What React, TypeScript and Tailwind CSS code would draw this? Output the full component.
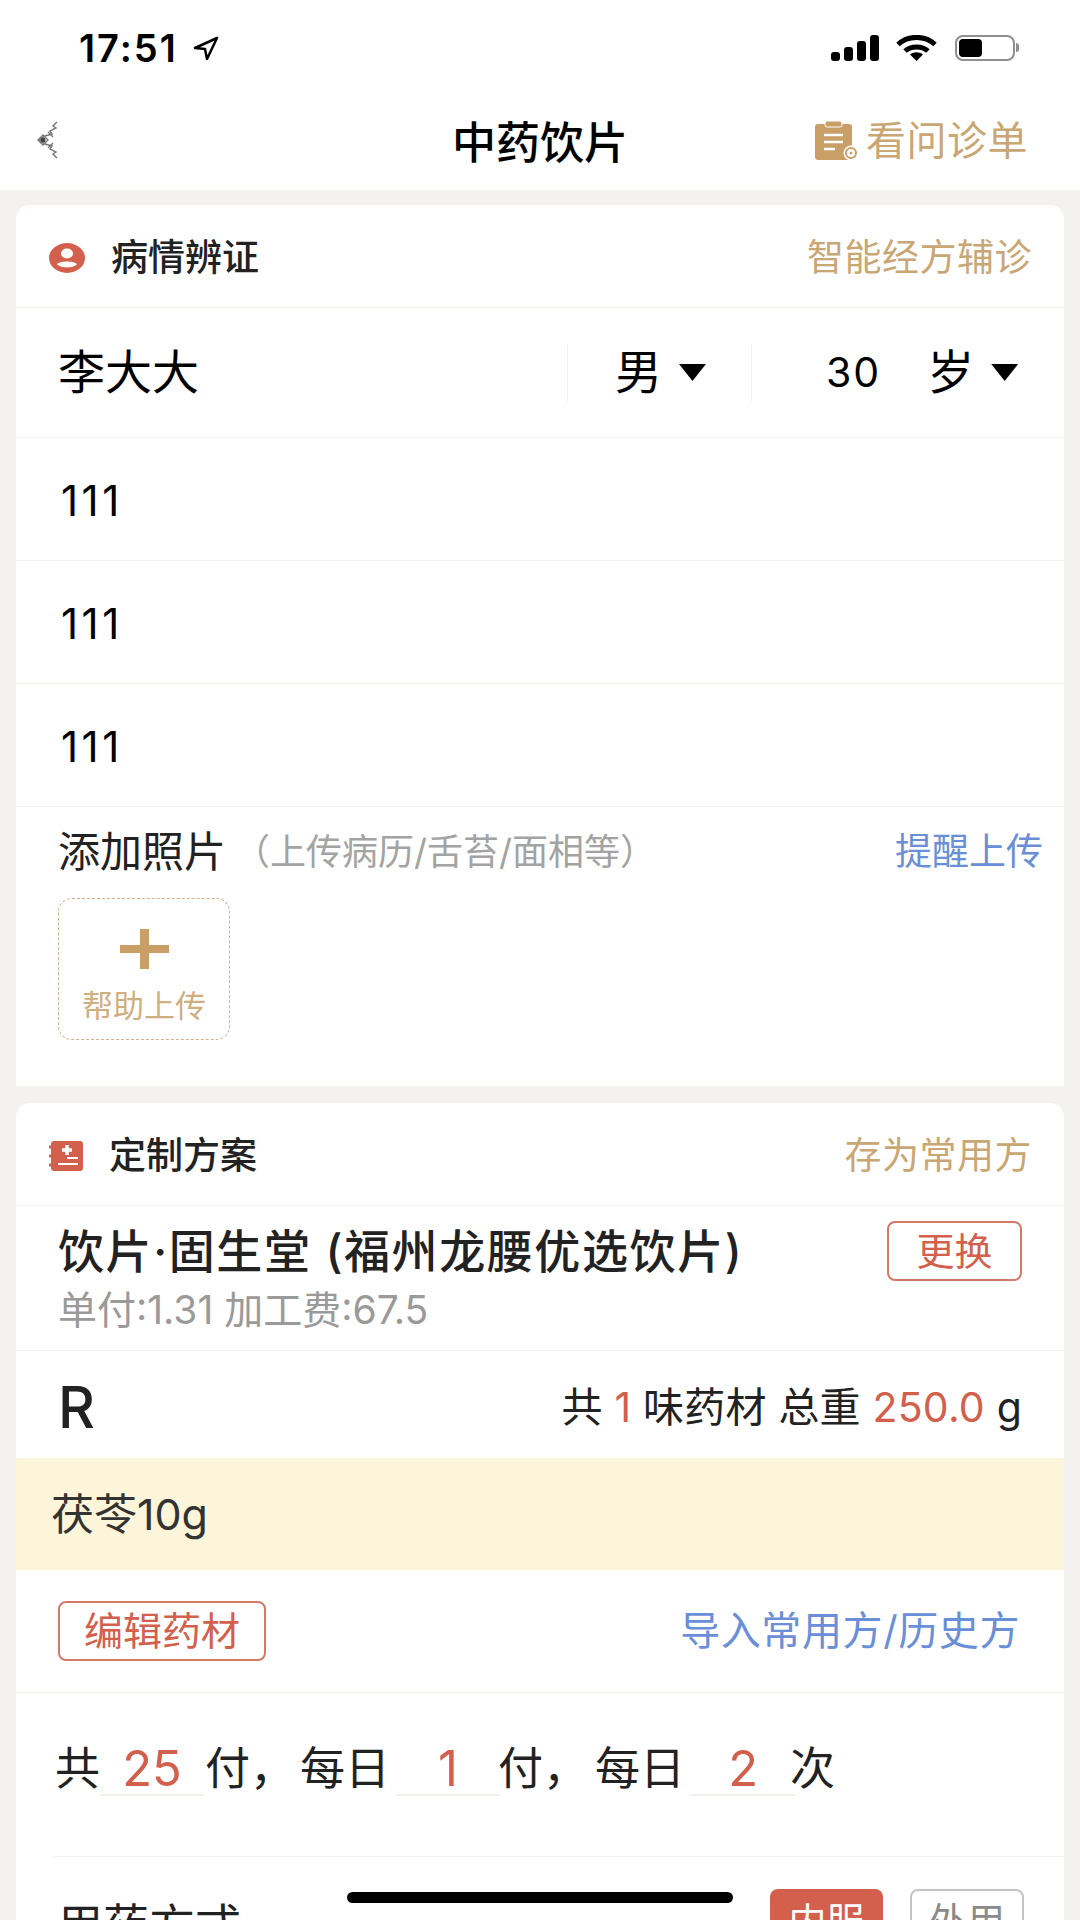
import { ReactNode } from 'react';

function BackIcon() {
  return (
    <svg width="24" height="38" viewBox="0 0 24 38" fill="none" stroke="#777" strokeWidth="1.4">
      <path d="M21 1 L17 5 L20 7 L14 10 L16 13 L9 15 L3 19 L9 23 L16 25 L14 28 L20 31 L17 33 L21 37" />
      <path d="M7 14 L12 19 L7 24 L2 19 Z M12 11 L17 16 M12 27 L17 22" />
      <circle cx="7" cy="19" r="2.5" fill="#444" stroke="none" />
    </svg>
  );
}

function StatusIcons() {
  return (
    <div className="flex items-center">
      <svg width="48" height="26" viewBox="0 0 48 26" fill="#000">
        <rect x="0" y="17" width="9" height="9" rx="3" />
        <rect x="13" y="12" width="9" height="14" rx="3" />
        <rect x="26" y="6" width="9" height="20" rx="3" />
        <rect x="39" y="0" width="9" height="26" rx="3" />
      </svg>
      <svg className="ml-[17px]" width="41" height="26" viewBox="0 0 41 26" fill="none" stroke="#000" strokeWidth="5">
        <path d="M2 9.5 C12 0 29 0 39 9.5" />
        <path d="M9 16 C15 10.5 26 10.5 32 16" />
        <path d="M20.5 26 L14 19.5 C18 16.5 23 16.5 27 19.5 Z" fill="#000" stroke="none" />
      </svg>
      <div className="ml-[18px] flex items-center">
        <div className="w-[60px] h-[26px] rounded-[8px] border-2 border-[#8f8f8f] p-[2px]">
          <div className="w-[23px] h-full rounded-[4px] bg-black" />
        </div>
        <div className="ml-[1px] w-[3px] h-[9px] rounded-r-sm bg-[#8f8f8f]" />
      </div>
    </div>
  );
}

function ClipboardIcon() {
  return (
    <svg width="45" height="40" viewBox="0 0 45 40">
      <rect x="0" y="3" width="37" height="36" rx="3" fill="#c99f67" />
      <rect x="10" y="0" width="17" height="6" rx="2" fill="#c99f67" stroke="#fff" strokeWidth="1" />
      <path d="M9 14 H28 M9 21 H28 M9 28 H20" stroke="#fff" strokeWidth="2.5" />
      <circle cx="36" cy="32" r="7.5" fill="#fff" />
      <circle cx="36" cy="32" r="5" fill="none" stroke="#c99f67" strokeWidth="2" />
      <circle cx="36" cy="32" r="1.5" fill="#c99f67" />
    </svg>
  );
}

function PersonIcon() {
  return (
    <svg width="36" height="30" viewBox="0 0 36 30">
      <ellipse cx="18" cy="15" rx="18" ry="15" fill="#d2604c" />
      <ellipse cx="18" cy="10.5" rx="6" ry="5" fill="#fff" />
      <path d="M8 21 C11 17.5 25 17.5 28 21 C25 25.5 11 25.5 8 21 Z" fill="#fff" />
    </svg>
  );
}

function BookIcon() {
  return (
    <svg width="34" height="30" viewBox="0 0 34 30">
      <rect x="2" y="0" width="32" height="30" rx="3" fill="#d2604c" />
      <path d="M0 6 H5 M0 15 H5 M0 24 H5" stroke="#d2604c" strokeWidth="3" strokeLinecap="round" />
      <path d="M18 4 V14 M13 9 H23" stroke="#fff" strokeWidth="3.5" />
      <path d="M18 17 H29 M9 23 H29" stroke="#fff" strokeWidth="2" />
    </svg>
  );
}

function Caret() {
  return <div className="w-[27px] h-[17px] bg-black [clip-path:polygon(0_0,100%_0,50%_100%)]" />;
}

function CardHeader({ icon, title, action }: { icon: ReactNode; title: string; action: string }) {
  return (
    <div className="h-[103px] flex items-center justify-between pl-[33px] pr-[32px] pt-[3px] border-b border-[#f1f0ec]">
      <div className="flex items-center">
        {icon}
        <span className="ml-[26px] text-[37px] font-medium text-[#222]">{title}</span>
      </div>
      <span className="text-[37px] tracking-[0.5px] text-[#c9a775]">{action}</span>
    </div>
  );
}

function TextRow({ value }: { value: string }) {
  return (
    <div className="h-[123px] flex items-center pl-[45px] pt-[3px] text-[42px] tracking-[3.5px] text-black border-b border-[#f1f0ec]">
      {value}
    </div>
  );
}

function Dose({ value }: { value: string }) {
  return (
    <div className="relative w-[104px] text-center text-[#d2604c] text-[49px] leading-[56px]">
      {value}
      <div className="absolute left-0 right-0 top-[53px] h-[2px] bg-[#f1f0ec]" />
    </div>
  );
}

export default function App() {
  return (
    <div className="relative w-[1080px] h-[1920px] overflow-hidden bg-[#f3f2ee] [font-family:Inter,'Noto_Sans_CJK_SC',sans-serif]">
      <div className="bg-white h-[190px]">
        <div className="h-[95px] flex items-center justify-between pl-[79px] pr-[61px]">
          <div className="flex items-center">
            <span className="text-[38px] tracking-[2px] font-semibold text-black leading-none">17:51</span>
            <svg className="ml-[15px]" width="26" height="24" viewBox="0 0 26 24" fill="none" stroke="#000" strokeWidth="2.5" strokeLinejoin="round">
              <path d="M24 2 L2 12 L12 13 L14 23 Z" />
            </svg>
          </div>
          <StatusIcons />
        </div>
        <div className="relative h-[90px] flex items-center justify-between pl-[36px] pr-[52px]">
          <BackIcon />
          <span className="absolute left-0 right-0 top-[15px] text-center text-[44px] font-medium text-black">中药饮片</span>
          <div className="relative flex items-center pt-[1px]">
            <ClipboardIcon />
            <span className="ml-[6px] text-[40px] tracking-[0.5px] text-[#c9a775]">看问诊单</span>
          </div>
        </div>
      </div>

      <div className="mt-[15px] mx-[16px] bg-white rounded-t-[14px]">
        <CardHeader icon={<PersonIcon />} title="病情辨证" action="智能经方辅诊" />
        <div className="h-[130px] flex items-center border-b border-[#f1f0ec] text-[47px] text-black">
          <div className="w-[551px] pl-[42px]">李大大</div>
          <div className="w-px h-[57px] bg-[#f1f0ec]" />
          <div className="w-[183px] flex items-center pl-[47px]">
            <span>男</span>
            <div className="ml-[17px]"><Caret /></div>
          </div>
          <div className="w-px h-[57px] bg-[#f1f0ec]" />
          <div className="flex items-center">
            <span className="ml-[74px] text-[41px] tracking-[2px]">30</span>
            <span className="ml-[46px]">岁</span>
            <div className="ml-[17px]"><Caret /></div>
          </div>
        </div>
        <TextRow value="111" />
        <TextRow value="111" />
        <TextRow value="111" />
        <div className="h-[279px] pl-[42px] pr-[21px] pt-[13px]">
          <div className="flex items-center justify-between">
            <div className="flex items-center">
              <span className="text-[42px] text-[#222]">添加照片</span>
              <span className="ml-[8px] text-[36px] text-[#a3a3a3]">（上传病历/舌苔/面相等）</span>
            </div>
            <span className="text-[37px] text-[#6a8fd8]">提醒上传</span>
          </div>
          <div className="mt-[15px] w-[172px] h-[142px] rounded-[14px] border border-dashed border-[#cfb38c] flex flex-col items-center">
            <svg className="mt-[30px]" width="49" height="40" viewBox="0 0 49 40" fill="#c99f67">
              <rect x="20" y="0" width="9" height="40" />
              <rect x="0" y="16" width="49" height="8" />
            </svg>
            <span className="mt-[18px] text-[31px] leading-[38px] text-[#cfae80]">帮助上传</span>
          </div>
        </div>
      </div>

      <div className="mt-[17px] mx-[16px] bg-white rounded-t-[14px]">
        <CardHeader icon={<BookIcon />} title="定制方案" action="存为常用方" />
        <div className="h-[145px] relative pl-[42px] pr-[42px] border-b border-[#f1f0ec]">
          <div className="flex items-start justify-between pt-[15px]">
            <span className="text-[46px] tracking-[1.6px] leading-[60px] font-medium text-[#222] whitespace-nowrap">饮片·固生堂 (福州龙腰优选饮片)</span>
            <div className="w-[135px] h-[60px] rounded-[8px] border-2 border-[#d2796a] flex items-center justify-center text-[38px] text-[#d2604c]">更换</div>
          </div>
          <div className="text-[39px] leading-[44px] text-[#9a9a9a] mt-[7px]">单付:1.31 加工费:67.5</div>
        </div>
        <div className="h-[107px] flex items-center justify-between pl-[42px] pr-[42px]">
          <span className="text-[57px] font-medium text-[#222] mt-[6px]">R</span>
          <span className="text-[41px] tracking-[0.2px] text-[#222] mt-[6px]">共 <span className="text-[#d2604c]">1</span> 味药材 总重 <span className="text-[#d2604c]">250.0</span> g</span>
        </div>
        <div className="h-[112px] flex items-center pl-[35px] bg-[#fdf5d9] text-[43px] text-[#333]">茯苓10g</div>
        <div className="h-[123px] flex items-center justify-between pl-[42px] pr-[44px] border-b border-[#f1f0ec]">
          <div className="w-[208px] h-[60px] rounded-[8px] border-2 border-[#d2796a] flex items-center justify-center text-[39px] text-[#d2604c]">编辑药材</div>
          <span className="text-[40px] tracking-[0.6px] text-[#6a8fd8]">导入常用方/历史方</span>
        </div>
        <div className="h-[163px] flex items-center pl-[39px] pb-[12px] text-[45px] text-[#222] leading-[56px]">
          <span>共</span>
          <Dose value="25" />
          <span className="ml-[1px]">付，</span>
          <span className="ml-[5px]">每日</span>
          <div className="ml-[6px]"><Dose value="1" /></div>
          <span className="-ml-[2px]">付，</span>
          <span className="ml-[7px]">每日</span>
          <div className="ml-[6px]"><Dose value="2" /></div>
          <span className="-ml-[5px]">次</span>
        </div>
        <div className="ml-[37px] h-px bg-[#f1f0ec]" />
        <div className="h-[100px] flex items-start justify-between pl-[41px] pr-[40px] pt-[32px]">
          <span className="text-[46px] leading-[56px] text-[#222] mt-[8px]">用药方式</span>
          <div className="flex">
            <div className="w-[113px] h-[64px] rounded-[8px] bg-[#d2604c] flex items-center justify-center text-[38px] text-white">内服</div>
            <div className="ml-[27px] w-[114px] h-[64px] rounded-[8px] border-2 border-[#c4c4c4] flex items-center justify-center text-[38px] text-[#8a8a8a]">外用</div>
          </div>
        </div>
      </div>

      <div className="absolute left-[347px] top-[1892px] w-[386px] h-[11px] rounded-full bg-black" />
    </div>
  );
}
